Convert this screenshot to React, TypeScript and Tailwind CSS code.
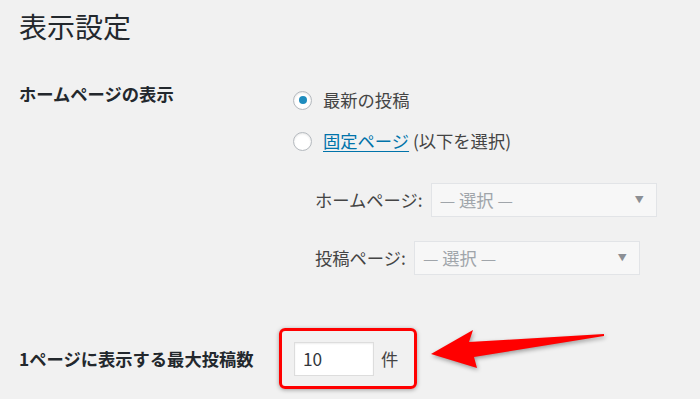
import React from "react";

const font = { fontFamily: '"Noto Sans CJK JP", "Noto Sans", sans-serif' };

function Radio({ checked }: { checked?: boolean }) {
  return (
    <span className="flex h-[19px] w-[19px] shrink-0 items-center justify-center rounded-full border border-[#b4b9be] bg-white shadow-[inset_0_1px_2px_rgba(0,0,0,0.1)]">
      {checked && <span className="h-[8px] w-[8px] rounded-full bg-[#1e8cbe]" />}
    </span>
  );
}

function Select({ width }: { width: string }) {
  return (
    <div
      className={`flex h-[34px] ${width} items-center justify-between border border-[#e2e4e7] bg-[#f7f7f7] pl-[8px] pr-[12px] text-[17.3px] text-[#a0a5aa]`}
    >
      <span>— 選択 —</span>
      <span className="text-[9px] text-[#8c8f94]">▼</span>
    </div>
  );
}

export default function App() {
  return (
    <div
      className="relative h-[399px] w-[700px] overflow-hidden bg-[#f1f1f1] pl-[19px] text-[#444]"
      style={font}
    >
      <h1 className="pt-[8px] text-[28px] leading-[36px] font-normal text-[#23282d]">表示設定</h1>

      <div className="mt-[38px] flex items-start">
        <div className="w-[274px] text-[17.3px] font-bold leading-[24px] text-[#23282d]">
          ホームページの表示
        </div>
        <div className="flex flex-col pt-[6px]">
          <div className="flex h-[24px] items-center gap-[11px] text-[17.3px]">
            <Radio checked />
            <span>最新の投稿</span>
          </div>
          <div className="mt-[17px] flex h-[24px] items-center gap-[11px] text-[17.3px]">
            <Radio />
            <span>
              <span className="text-[#0073aa] underline underline-offset-[3px]">固定ページ</span> (以下を選択)
            </span>
          </div>
          <div className="mt-[30px] flex items-center gap-[8px] pl-[22px] text-[17.3px]">
            <span>ホームページ:</span>
            <Select width="w-[226px]" />
          </div>
          <div className="mt-[24px] flex items-center gap-[8px] pl-[22px] text-[17.3px]">
            <span>投稿ページ:</span>
            <Select width="w-[226px]" />
          </div>
        </div>
      </div>

      <div className="mt-[67px] flex items-center">
        <div className="w-[275px] text-[17.3px] font-bold leading-[24px] text-[#23282d]">
          1ページに表示する最大投稿数
        </div>
        <div className="flex h-[34px] w-[80px] items-center border border-[#ddd] bg-white pl-[8px] text-[17.3px] text-[#32373c] shadow-[inset_0_1px_2px_rgba(0,0,0,0.07)]">
          10
        </div>
        <span className="ml-[7px] text-[17.3px]">件</span>
      </div>

      {/* red annotation box */}
      <div className="pointer-events-none absolute left-[279px] top-[328px] h-[61px] w-[138px] rounded-[6px] border-[3px] border-[#ff0000] shadow-[0_1px_4px_rgba(0,0,0,0.35)]" />

      {/* red arrow */}
      <svg
        className="pointer-events-none absolute left-0 top-0"
        width="700"
        height="399"
        viewBox="0 0 700 399"
        style={{ filter: "drop-shadow(1px 2px 2px rgba(0,0,0,0.35))" }}
      >
        <polygon
          points="431,354 473,330 469,342 604,334 604,336 474,357 477,368"
          fill="#ff0000"
        />
      </svg>
    </div>
  );
}
